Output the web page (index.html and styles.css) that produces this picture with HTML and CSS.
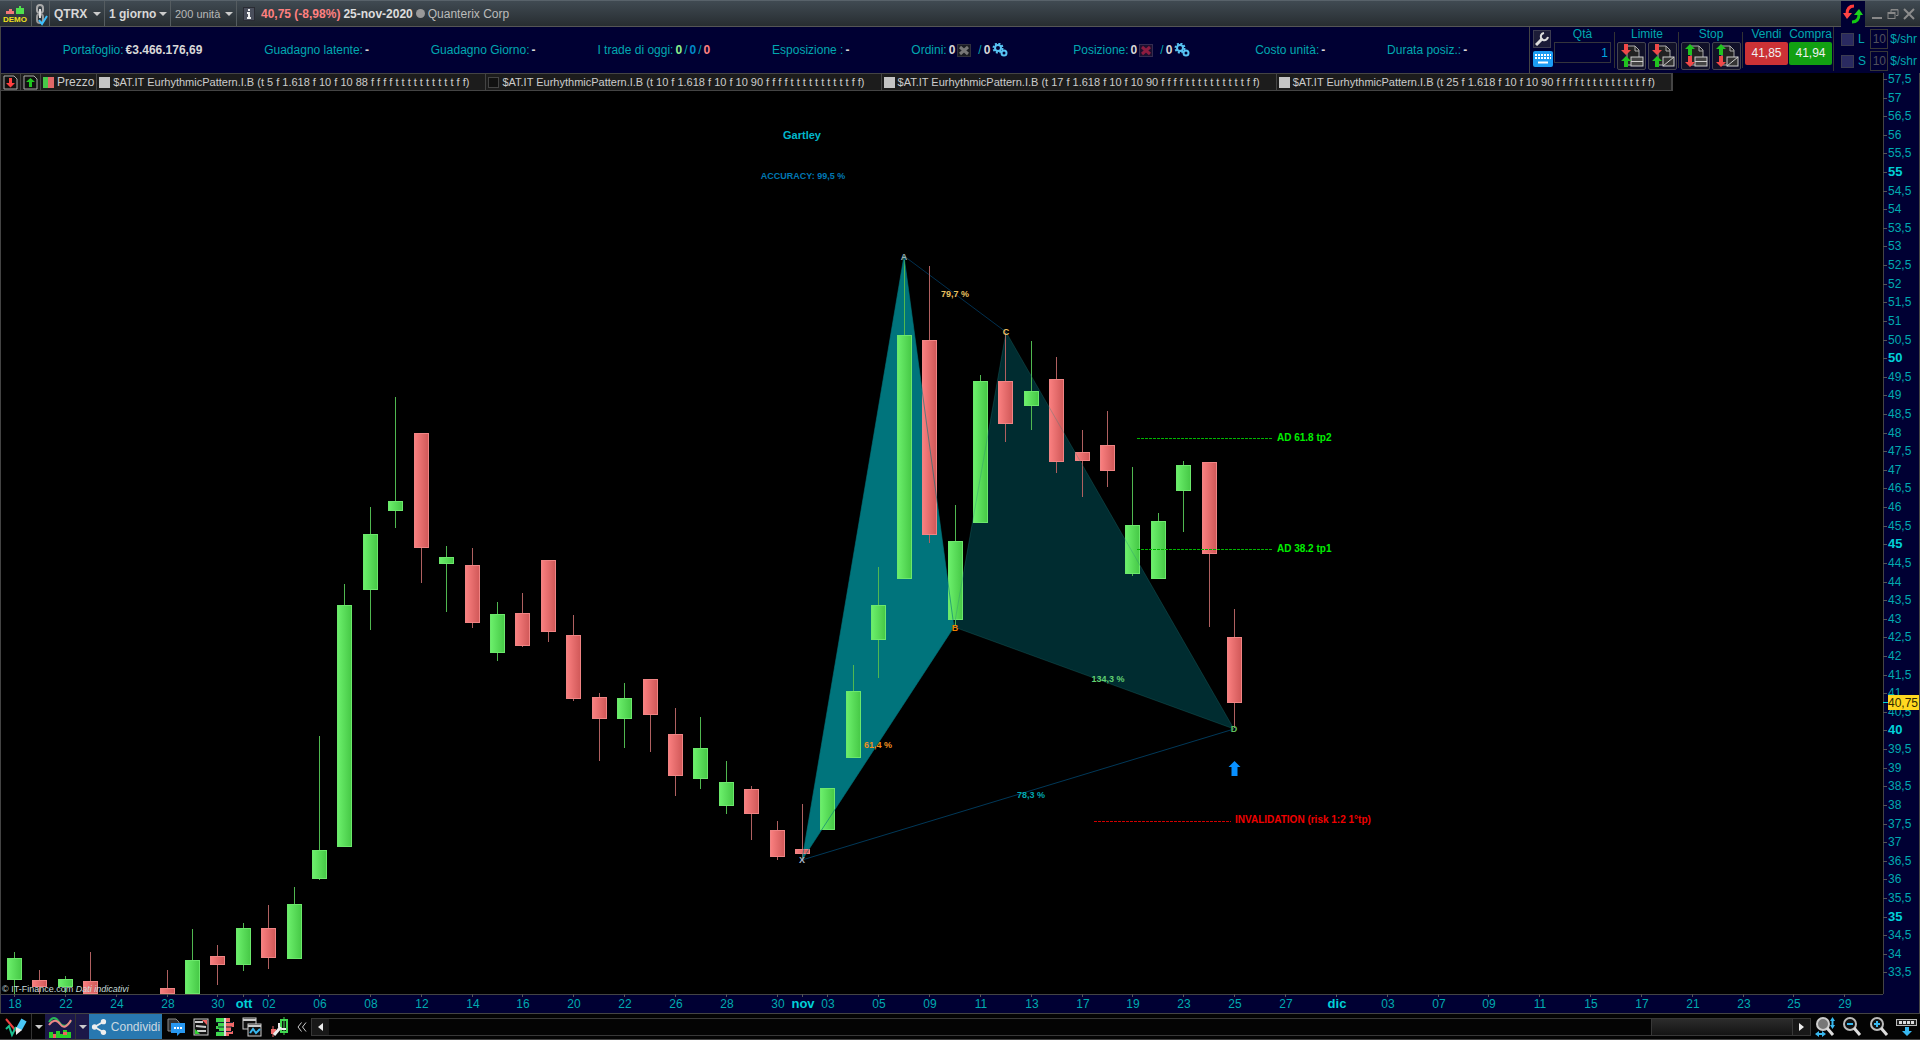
FILE: index.html
```html
<!DOCTYPE html>
<html lang="it">

<head>
    <meta charset="UTF-8">
    <meta name="viewport" content="width=device-width, initial-scale=1.0">
    <title>QTRX - Quanterix Corp</title>

    <link rel="stylesheet" href="styles.css">
</head>

<body>

    <div class="titlebar">
        <div class="cell demo">
            <svg width="26" height="24" viewBox="0 0 26 24">
                <path d="M4 9h8v3H4zM7 7h3v3H7z" fill="#f07878" />
                <path d="M14 6h8v6h-8zM17 4h2v3h-2z" fill="#4fe04f" />
                <text x="1" y="20" class="demo-text">DEMO</text>
            </svg>
        </div>
        <div class="cell link">
            <svg width="16" height="24" viewBox="0 0 16 24" fill="none">
                <rect x="4" y="3" width="6" height="8" rx="3" stroke="#aaa" stroke-width="2" />
                <rect x="4" y="12" width="6" height="9" rx="3" stroke="#999" stroke-width="2" />
                <path d="M7 7v9" stroke="#ddd" stroke-width="2" />
                <path d="M6 18l3 4 5-8" stroke="#3cc0ff" stroke-width="2" />
            </svg>
        </div>
        <label class="cell picker">
            <select class="bold" aria-label="Titolo"><option>QTRX</option></select>
            <span class="caret"></span>
        </label>
        <label class="cell picker">
            <select class="bold" aria-label="Periodo"><option>1 giorno</option></select>
            <span class="caret"></span>
        </label>
        <label class="cell picker">
            <select aria-label="Storico"><option>200 unità</option></select>
            <span class="caret"></span>
        </label>
        <div class="quote">
            <svg width="12" height="14" viewBox="0 0 12 14">
                <rect x="0.5" y="0.5" width="11" height="13" fill="#4a4f5c" stroke="#2a2c34" />
                <path d="M5 2h2v2H5zM4 5h3v5h1v2H4v-2h1V7H4z" fill="#eee" />
            </svg>
            <b class="loss">40,75 (-8,98%)</b>
            <b>25-nov-2020</b>
            <span class="dot"></span>
            <span>Quanterix Corp</span>
        </div>
        <div class="sync">
            <svg width="20" height="20" viewBox="0 0 20 20">
                <path d="M11 2Q4 2 4 10" fill="none" stroke="#ff3b3b" stroke-width="3" />
                <path d="M0 9h9l-5 6z" fill="#ff4545" />
                <path d="M9 18Q16 18 16 10" fill="none" stroke="#12c812" stroke-width="3" />
                <path d="M11 11h9l-4-6z" fill="#1fd01f" />
            </svg>
        </div>
        <div class="window-buttons">
            <button aria-label="Riduci"><svg width="12" height="14" viewBox="0 0 12 14"><path d="M1 11h10" stroke="#888" stroke-width="2" /></svg></button>
            <button aria-label="Ripristina"><svg width="12" height="12" viewBox="0 0 12 12" fill="none" stroke="#888"><path d="M4 4V1.500h7v6H9M4 2h7" /><rect x="1" y="4.500" width="7" height="6" /><path d="M1 5h7" stroke-width="2" /></svg></button>
            <button aria-label="Chiudi"><svg width="12" height="12" viewBox="0 0 12 12"><path d="M1 1l10 10M11 1L1 11" stroke="#8c8c8c" stroke-width="2" /></svg></button>
        </div>
    </div>

    <div class="infobar">
        <div class="stats">
            <div class="stat">Portafoglio: <b>€3.466.176,69</b></div>
            <div class="stat">Guadagno latente: <b>-</b></div>
            <div class="stat">Guadagno Giorno: <b>-</b></div>
            <div class="stat">I trade di oggi: <b class="gain">0</b> / <b class="flat">0</b> / <b class="loss">0</b></div>
            <div class="stat">Esposizione : <b>-</b></div>
            <div class="stat">Ordini: <b>0</b>
                <svg width="14" height="13" viewBox="0 0 14 13"><rect x="0.5" y="0.5" width="13" height="12" fill="#1a1c22" stroke="#30303c" /><path d="M3 3l8 7M11 3l-8 7" stroke="#777" stroke-width="3" /></svg>
                <span class="slash">/</span> <b>0</b><svg class="gears" width="16" height="14" viewBox="0 0 16 14" fill="none" stroke="#58c4f4"><circle cx="6" cy="5" r="3" stroke-width="2" /><circle cx="6" cy="5" r="4.500" stroke-width="2" stroke-dasharray="2 1.500" /><circle cx="12" cy="10" r="2.500" stroke-width="2" /></svg>
            </div>
            <div class="stat">Posizione: <b>0</b>
                <svg width="14" height="13" viewBox="0 0 14 13"><rect x="0.5" y="0.5" width="13" height="12" fill="#1c1030" stroke="#342c50" /><path d="M3 3l8 7M11 3l-8 7" stroke="#8c1c40" stroke-width="3" /></svg>
                <span class="slash">/</span> <b>0</b><svg class="gears" width="16" height="14" viewBox="0 0 16 14" fill="none" stroke="#58c4f4"><circle cx="6" cy="5" r="3" stroke-width="2" /><circle cx="6" cy="5" r="4.500" stroke-width="2" stroke-dasharray="2 1.500" /><circle cx="12" cy="10" r="2.500" stroke-width="2" /></svg>
            </div>
            <div class="stat">Costo unità: <b>-</b></div>
            <div class="stat">Durata posiz.: <b>-</b></div>
        </div>

        <div class="trade">
            <div class="tools">
                <button class="tool" aria-label="Impostazioni"><svg width="14" height="14" viewBox="0 0 14 14" fill="none" stroke="#ddd"><path d="M1 13l6-6" stroke-width="3" /><path d="M9 1Q5 2 6 6l2 2q4 1 5-3" stroke-width="2" /></svg></button>
                <button class="keyboard" aria-label="Tastiera"><svg width="16" height="11" viewBox="0 0 16 11"><path d="M0 1h16M0 4h16" stroke="#fff" stroke-width="2" stroke-dasharray="2 1" /><path d="M3 8.500h10" stroke="#fff" stroke-width="2" /></svg></button>
            </div>
            <div class="group qty">
                <label for="qty">Qtà</label>
                <input type="text" id="qty" value="1">
            </div>
            <div class="group ruled">
                <span>Limite</span>
                <div class="pair">
                    <button class="order" aria-label="Limite acquisto"><svg width="26" height="26" viewBox="0 0 26 26"><path d="M8 3h8l4 4v15H8z" fill="#222" stroke="#aaa" /><path d="M16 3v5h4" fill="none" stroke="#aaa" /><rect x="12" y="14" width="12" height="9" fill="#444" stroke="#ccc" /><path d="M12 18.500h12" stroke="#ccc" /><path d="M5 1h4v6h3l-5 5-5-5h3z" fill="#f04848" /><path d="M5 24h4v-6h3l-5-5-5 5h3z" fill="#20c420" /></svg></button>
                    <button class="order" aria-label="Limite vendita"><svg width="26" height="26" viewBox="0 0 26 26"><path d="M8 3h8l4 4v15H8z" fill="#222" stroke="#aaa" /><path d="M16 3v5h4" fill="none" stroke="#aaa" /><rect x="13" y="14" width="11" height="9" fill="#333" stroke="#ccc" /><path d="M13 23l11-9" stroke="#ccc" /><path d="M5 1h4v6h3l-5 5-5-5h3z" fill="#f04848" /><path d="M5 24h4v-6h3l-5-5-5 5h3z" fill="#20c420" /></svg></button>
                </div>
            </div>
            <div class="group ruled">
                <span>Stop</span>
                <div class="pair">
                    <button class="order" aria-label="Stop acquisto"><svg width="26" height="26" viewBox="0 0 26 26"><path d="M8 3h8l4 4v15H8z" fill="#222" stroke="#aaa" /><path d="M16 3v5h4" fill="none" stroke="#aaa" /><rect x="12" y="14" width="12" height="9" fill="#444" stroke="#ccc" /><path d="M12 18.500h12" stroke="#ccc" /><path d="M5 12h4V6h3L7 1 2 6h3z" fill="#20c420" /><path d="M5 13h4v6h3l-5 5-5-5h3z" fill="#f04848" /></svg></button>
                    <button class="order" aria-label="Stop vendita"><svg width="26" height="26" viewBox="0 0 26 26"><path d="M8 3h8l4 4v15H8z" fill="#222" stroke="#aaa" /><path d="M16 3v5h4" fill="none" stroke="#aaa" /><rect x="13" y="14" width="11" height="9" fill="#333" stroke="#ccc" /><path d="M13 23l11-9" stroke="#ccc" /><path d="M5 12h4V6h3L7 1 2 6h3z" fill="#20c420" /><path d="M5 13h4v6h3l-5 5-5-5h3z" fill="#f04848" /></svg></button>
                </div>
            </div>
            <div class="group ruled">
                <span>Vendi</span>
                <button class="sell">41,85</button>
            </div>
            <div class="group">
                <span>Compra</span>
                <button class="buy">41,94</button>
            </div>
            <div class="brackets">
                <div class="bracket">
                    <label class="side"><input type="checkbox">L</label>
                    <label class="offset"><input type="text" value="10">$/shr</label>
                </div>
                <div class="bracket">
                    <label class="side"><input type="checkbox">S</label>
                    <label class="offset"><input type="text" value="10">$/shr</label>
                </div>
            </div>
        </div>
    </div>

    <div class="chart">
        <svg id="chart" viewBox="0 73 1920 940" preserveAspectRatio="xMaxYMin meet">
            <defs>
                <linearGradient id="up">
                    <stop offset="0" stop-color="#6cf06c" />
                    <stop offset="1" stop-color="#46c846" />
                </linearGradient>
                <linearGradient id="down">
                    <stop offset="0" stop-color="#fa8080" />
                    <stop offset="1" stop-color="#d05858" />
                </linearGradient>
            </defs>
        </svg>
        <div class="legend">
            <div class="entry icon"><svg width="15" height="15" viewBox="0 0 15 15"><path d="M1 1h10l3 3v10H1z" fill="#111" stroke="#aaa" /><path d="M6 3h3v5h3l-4.500 4.500L3 8h3z" fill="#ff4040" /></svg></div>
            <div class="entry icon"><svg width="15" height="15" viewBox="0 0 15 15"><path d="M1 1h10l3 3v10H1z" fill="#111" stroke="#aaa" /><path d="M6 12h3V7h3L7.500 3 3 7h3z" fill="#20c820" /></svg></div>
            <div class="entry price"><span class="swatch two"></span>Prezzo</div>
            <div class="entry"><span class="swatch"></span>$AT.IT EurhythmicPattern.I.B (t 5 f 1.618 f 10 f 10 88 f f f f t t t t t t t t t t f f)</div>
            <div class="entry"><span class="swatch dark"></span>$AT.IT EurhythmicPattern.I.B (t 10 f 1.618 f 10 f 10 90 f f f f t t t t t t t t t t f f)</div>
            <div class="entry"><span class="swatch"></span>$AT.IT EurhythmicPattern.I.B (t 17 f 1.618 f 10 f 10 90 f f f f t t t t t t t t t t f f)</div>
            <div class="entry"><span class="swatch"></span>$AT.IT EurhythmicPattern.I.B (t 25 f 1.618 f 10 f 10 90 f f f f t t t t t t t t t t f f)</div>
        </div>
    </div>

    <div class="toolbar">
        <button class="draw" aria-label="Disegna"><svg width="24" height="22" viewBox="0 0 24 22" fill="none"><path d="M2 3l10 12" stroke="#f04040" stroke-width="2" /><path d="M2 13l3-3 3 9 4-8" stroke="#1cc090" stroke-width="2" /><path d="M15 13l5-9" stroke="#48c8f8" stroke-width="6" /><path d="M12 11l6 3-6 5z" fill="#eee" /></svg></button>
        <button class="arrow" aria-label="Strumenti di disegno"><span class="caret"></span></button>
        <button class="style lit" aria-label="Indicatori"><svg width="24" height="24" viewBox="0 0 24 24" fill="none"><path d="M1 7Q6-1 11 7T23 6" stroke="#28b858" stroke-width="2" /><path d="M1 10q6-8 11-1t11-4" stroke="#e88" stroke-width="2" /><path d="M1 23v-6h4v2h3v-3h4v3h3v-4h4v2h4v6z" fill="#28d028" /><path d="M5 19h3v4H5zM15 17h4v3h-4z" fill="#f06060" /></svg></button>
        <button class="arrow lit" aria-label="Elenco indicatori"><span class="caret"></span></button>
        <button class="share"><svg width="16" height="16" viewBox="0 0 18 18"><path d="M14 3L4 9l10 6" fill="none" stroke="#eee" stroke-width="2" /><circle cx="14" cy="3" r="3" fill="#eee" /><circle cx="4" cy="9" r="3" fill="#eee" /><circle cx="14" cy="15" r="3" fill="#eee" /></svg>Condividi</button>
        <div class="actions">
            <button aria-label="Chat"><svg width="18" height="18" viewBox="0 0 18 18"><path d="M1 1h8l3 3v9H1z" fill="#333" stroke="#888" /><path d="M4 5h14v10h-5l-3 3v-3H4z" fill="#2898f0" /><path d="M7 10h8" stroke="#fff" stroke-width="2" stroke-dasharray="2 1" /></svg></button>
            <button aria-label="Lista"><svg width="16" height="18" viewBox="0 0 16 18"><rect x="1" y="1" width="14" height="16" fill="#111" stroke="#ccc" /><path d="M2 4h8M3 8l10 1M4 13h9" stroke="#ccc" stroke-width="2" /><path d="M9 2h5v5z" fill="#f06060" /><path d="M2 16h5l-5-5z" fill="#30d030" /></svg></button>
            <button aria-label="Book"><svg width="18" height="18" viewBox="0 0 18 18"><path d="M0 0h9v18H0v-4h3v-3H0V8h2V5H0z" fill="#40d850" /><path d="M9 0h5v4h4v5h-3v4h2v3h-4v2H9z" fill="#f06868" /><path d="M0 4.500h17M2 9h14M1 13.500h15" stroke="#123" /><path d="M9 0v18" stroke="#ddd" stroke-width="2" /></svg></button>
            <button aria-label="Finestre"><svg width="20" height="20" viewBox="0 0 20 20" fill="#111" stroke="#ccc"><rect x="1" y="1" width="13" height="11" /><path d="M1 3h13" stroke-width="2" /><rect x="6" y="7" width="13" height="12" /><path d="M6 9h13" stroke-width="2" /><path d="M8 16l3-4 3 4 4-4" fill="none" stroke="#38b8f0" stroke-width="2" /></svg></button>
            <button aria-label="Backtest"><svg width="20" height="20" viewBox="0 0 20 20"><path d="M2 12h5v5H2z" fill="#f06868" /><path d="M4 9v11" stroke="#f06868" /><path d="M12 3h6v12h-6z" fill="#111" stroke="#40d850" stroke-width="2" /><path d="M15 0v18" stroke="#40d850" /><path d="M5 18l6-7" stroke="#eee" stroke-width="3" /><path d="M10 6v4l3 2h4" fill="none" stroke="#eee" stroke-width="2" /></svg></button>
            <button aria-label="Riduci barra"><svg width="10" height="10" viewBox="0 0 10 10" fill="none" stroke="#ccc"><path d="M4.500 0.500L1 5l3.500 4.500M9 0.500L5.500 5 9 9.500" /></svg></button>
        </div>
        <div class="scroll">
            <button class="step" aria-label="Indietro"><span class="left"></span></button>
            <div class="track"><div class="thumb"></div></div>
            <button class="step" aria-label="Avanti"><span class="right"></span></button>
        </div>
        <div class="zoom">
            <button aria-label="Adatta"><svg width="20" height="20" viewBox="0 0 20 20"><circle cx="8" cy="7" r="6" fill="#777" stroke="#ccc" stroke-width="2" /><path d="M12 11l6 7" stroke="#ddd" stroke-width="3" /><path d="M17.500 2v8M2 17h7" stroke="#38b8f0" stroke-width="2" /><path d="M15 4l2.500-4L20 4zM15 8l2.500 4L20 8zM4 14l-4 3 4 3zM7 14l4 3-4 3z" fill="#38b8f0" /></svg></button>
            <button aria-label="Zoom indietro"><svg width="20" height="20" viewBox="0 0 20 20"><circle cx="8" cy="7" r="6" fill="#111" stroke="#bbb" stroke-width="2" /><path d="M12 11l6 7" stroke="#ddd" stroke-width="3" /><path d="M5 7h6" stroke="#38b8f0" stroke-width="2" /></svg></button>
            <button aria-label="Zoom avanti"><svg width="20" height="20" viewBox="0 0 20 20"><circle cx="8" cy="7" r="6" fill="#111" stroke="#bbb" stroke-width="2" /><path d="M12 11l6 7" stroke="#ddd" stroke-width="3" /><path d="M5 7h6M8 4v6" stroke="#38b8f0" stroke-width="2" /></svg></button>
            <button aria-label="Barra in basso"><svg width="22" height="18" viewBox="0 0 22 18"><rect x="0.500" y="1.500" width="20" height="6" fill="#222" stroke="#bbb" /><path d="M3 4.500h16" stroke="#ddd" stroke-width="3" stroke-dasharray="3 1" /><path d="M9 9h4v4h3l-5 5-5-5h3z" fill="#38b8f0" /></svg></button>
        </div>
    </div>

    <script src="app.js"></script>
</body>

</html>
```

FILE: styles.css
```css
* {
    box-sizing: border-box;
}

body {
    margin: 0;
    height: 100vh;
    display: flex;
    flex-direction: column;
    background-color: #000;
    color: #d8d8d8;
    font-family: "Liberation Sans", Arial, sans-serif;
    font-size: 12px;
    overflow: hidden;
}

button,
select,
input {
    font: inherit;
    color: inherit;
    margin: 0;
    padding: 0;
    border: none;
    background: none;
    outline: none;
}

button {
    display: flex;
    align-items: center;
    justify-content: center;
    cursor: pointer;
}

svg {
    display: block;
    flex: none;
}

b,
.bold {
    font-weight: bold;
}

.caret {
    border: 4px solid transparent;
    border-top-color: #ccc;
    border-bottom: none;
}

/* title bar */
.titlebar {
    display: flex;
    align-items: stretch;
    height: 27px;
    border-top: 1px solid #58626a;
    border-bottom: 1px solid #555;
    background: linear-gradient(#404a52, #272d31);
}

.cell {
    display: flex;
    align-items: center;
    justify-content: space-between;
    border-right: 1px solid #555c60;
    padding: 0 3px 0 4px;
}

.cell.demo {
    width: 32px;
    padding: 0 2px;
}

.demo-text {
    font-size: 8px;
    font-weight: bold;
    fill: #f0e020;
}

.cell.link {
    width: 18px;
    padding: 0 1px;
}

.picker {
    width: 66px;
}

.picker:nth-child(3) {
    width: 55px;
}

.picker select {
    appearance: none;
}

.picker select:not(.bold) {
    font-size: 11px;
    color: #b8b8b8;
}

.quote {
    display: flex;
    align-items: center;
    gap: 3px;
    padding-left: 6px;
    flex: 1;
    color: #bbb;
}

.quote b {
    color: #ddd;
}

.quote .loss {
    margin-left: 3px;
    color: #ff8080;
}

.dot {
    width: 9px;
    height: 9px;
    border-radius: 50%;
    background-color: #999;
}

.sync {
    width: 24px;
    display: flex;
    align-items: center;
    justify-content: center;
    background-color: #000033;
    margin-bottom: -1px;
}

.window-buttons {
    display: flex;
    align-items: center;
    gap: 4px;
    padding: 0 5px 0 6px;
}

/* account info */
.infobar {
    display: flex;
    height: 46px;
    background-color: #000033;
    color: #00a8b0;
    border-left: 1px solid #444;
}

.stats {
    flex: 1;
    display: flex;
    align-items: center;
    justify-content: space-evenly;
}

.stat {
    display: flex;
    align-items: center;
    gap: 2px;
    white-space: nowrap;
}

.stat b {
    color: #d8d8d8;
}

.stat .gain {
    color: #8cf08c;
}

.stat .flat {
    color: #0088c8;
}

.stat .loss {
    color: #ff8080;
}

.slash {
    margin-left: 5px;
}

.gears {
    margin-right: 3px;
}

.trade {
    width: 391px;
    flex: none;
    display: flex;
    align-items: flex-start;
    padding-left: 3px;
    border-left: 1px solid #444;
}

.tools {
    display: flex;
    flex-direction: column;
    gap: 3px;
    padding-top: 3px;
    width: 20px;
}

.tool {
    width: 18px;
    height: 18px;
    background-color: #1c1c38;
    border: 1px solid #3c3c50;
}

.keyboard {
    width: 20px;
    height: 16px;
    background-color: #1c9cf4;
    border-radius: 2px;
}

.group {
    display: flex;
    flex-direction: column;
    align-items: center;
    gap: 1px;
    padding-top: 1px;
    line-height: 13px;
}

.qty {
    padding: 1px 3px 0 1px;
}

.qty input {
    width: 57px;
    height: 21px;
    padding-right: 2px;
    border: 1px solid #34343c;
    text-align: right;
    color: #00a8e0;
}

.ruled {
    position: relative;
    padding-left: 3px;
    margin-right: 1px;
}

.ruled::before {
    content: "";
    position: absolute;
    left: 0;
    top: 5px;
    width: 1px;
    height: 36px;
    background-color: #333;
}

.pair {
    display: flex;
    gap: 2px;
}

.order {
    width: 29px;
    height: 28px;
    border: 1px solid #444450;
    border-radius: 2px;
    background-color: #111128;
}

.sell,
.buy {
    width: 43px;
    height: 23px;
    border-radius: 2px;
    color: #f0f0f0;
}

.sell {
    background-color: #cc3236;
}

.buy {
    background-color: #12a012;
}

.brackets {
    flex: 1;
    display: flex;
    flex-direction: column;
    gap: 2px;
    padding: 2px 3px 0 7px;
    margin-left: 1px;
    border-left: 1px solid #333;
}

.bracket,
.side,
.offset {
    display: flex;
    align-items: center;
    gap: 2px;
}

.bracket {
    justify-content: space-between;
}

.side {
    gap: 4px;
}

.side input {
    appearance: none;
    width: 13px;
    height: 13px;
    background-color: #2a2a60;
    border: 1px solid #3c3c50;
}

.offset input {
    width: 18px;
    height: 20px;
    border: 1px solid #383838;
    text-align: center;
    color: #50505c;
}

/* chart */
.chart {
    position: relative;
    flex: 1;
    min-height: 0;
}

#chart {
    width: 100%;
    height: 100%;
}

#chart text {
    font-size: 12px;
    fill: #00aab0;
}

#chart .major {
    font-size: 13px;
    font-weight: bold;
    fill: #00d0d8;
}

#chart .note {
    font-size: 9px;
    font-weight: bold;
}

#chart .target {
    font-size: 10px;
    font-weight: bold;
}

#chart .name {
    font-size: 11px;
    font-weight: bold;
}

#chart .credit {
    font-size: 9px;
    fill: #c8dcdc;
}

.italic {
    font-style: italic;
}

.legend {
    position: absolute;
    left: 0;
    top: 0;
    display: flex;
    height: 18px;
    background-color: #1c1c1c;
    border: 1px solid #444;
    font-size: 11px;
    white-space: nowrap;
    color: #ccc;
}

.entry {
    display: flex;
    align-items: center;
    gap: 3px;
    padding: 0 16px 0 2px;
    border-right: 1px solid #444;
}

.entry.icon {
    width: 20px;
    padding: 0 2px;
}

.entry.price {
    padding-right: 2px;
    font-size: 12px;
}

.swatch {
    width: 11px;
    height: 11px;
    background-color: #c4c4c4;
}

.swatch.dark {
    background-color: #111;
    border: 1px solid #444;
}

.swatch.two {
    background: linear-gradient(90deg, #48c848 50%, #e06868 50%);
}

/* bottom bar */
.toolbar {
    display: flex;
    align-items: stretch;
    height: 27px;
    background-color: #040404;
    border-top: 1px solid #444;
    border-bottom: 1px solid #444;
}

.draw {
    width: 32px;
    border-right: 1px solid #333;
}

.arrow {
    width: 13px;
}

.style {
    width: 31px;
    border-right: 1px solid #333;
}

.lit {
    background-color: #1c1848;
}

.share {
    width: 73px;
    gap: 4px;
    margin-right: 5px;
    background-color: #2878b0;
    color: #ccd8e0;
}

.actions {
    display: flex;
    align-items: center;
    justify-content: space-between;
    width: 140px;
    margin-right: 4px;
}

.scroll {
    flex: 1;
    align-self: center;
    display: flex;
    height: 18px;
    border: 1px solid #383838;
}

.step {
    width: 17px;
    background-color: #181818;
}

.left,
.right {
    border: 4px solid transparent;
}

.left {
    border-left: none;
    border-right: 5px solid #eee;
}

.right {
    border-right: none;
    border-left: 5px solid #eee;
}

.track {
    flex: 1;
    display: flex;
    justify-content: flex-end;
}

.thumb {
    width: 142px;
    background: linear-gradient(#2c2c2c, #141414);
    border: 1px solid #383838;
    border-width: 0 1px;
}

.zoom {
    display: flex;
    align-items: center;
    gap: 7px;
    padding: 0 2px 0 4px;
}
```

FILE: app.js
```javascript
var chart = document.getElementById("chart");
var RIGHT = 1883;
var BOTTOM = 994;
var STEP = 25.42;

// slot, up/down, high, body top, body bottom, low
var candles = [
    [0, 1, 952, 958, 980, 994], [1, 0, 970, 980, 987, 994], [2, 1, 976, 979, 987, 993],
    [3, 0, 952, 981, 994, 994], [6, 0, 970, 988, 994, 994], [7, 1, 929, 960, 994, 994],
    [8, 0, 945, 956, 965, 985], [9, 1, 923, 928, 965, 971], [10, 0, 905, 928, 958, 969],
    [11, 1, 887, 904, 959, 959], [12, 1, 736, 850, 879, 880], [13, 1, 584, 605, 847, 847],
    [14, 1, 507, 534, 590, 630], [15, 1, 397, 501, 511, 528], [16, 0, 433, 433, 548, 583],
    [17, 1, 546, 557, 564, 612], [18, 0, 548, 565, 623, 628], [19, 1, 602, 614, 653, 661],
    [20, 0, 593, 613, 646, 647], [21, 0, 560, 560, 632, 642], [22, 0, 615, 635, 699, 701],
    [23, 0, 693, 697, 719, 761], [24, 1, 683, 698, 719, 748], [25, 0, 679, 679, 715, 752],
    [26, 0, 708, 734, 776, 796], [27, 1, 717, 748, 779, 789], [28, 1, 761, 782, 806, 814],
    [29, 0, 786, 789, 814, 840], [30, 0, 821, 830, 857, 860], [31, 0, 804, 849, 854, 860],
    [32, 1, 788, 788, 830, 830], [33, 1, 665, 691, 758, 758], [34, 1, 567, 605, 640, 678],
    [35, 1, 260, 335, 579, 579], [36, 0, 266, 340, 535, 543], [37, 1, 505, 541, 620, 625],
    [38, 1, 375, 381, 523, 523], [39, 0, 333, 381, 424, 442], [40, 1, 341, 391, 406, 430],
    [41, 0, 357, 379, 462, 473], [42, 0, 430, 452, 461, 497], [43, 0, 411, 445, 471, 487],
    [44, 1, 467, 525, 574, 576], [45, 1, 513, 521, 579, 579], [46, 1, 461, 465, 491, 532],
    [47, 0, 462, 462, 554, 627], [48, 0, 609, 637, 703, 728]
];

var days = {
    0: "18", 2: "22", 4: "24", 6: "28", 8: "30", 9: "ott", 10: "02", 12: "06", 14: "08", 16: "12",
    18: "14", 20: "16", 22: "20", 24: "22", 26: "26", 28: "28", 30: "30", 31: "nov", 32: "03",
    34: "05", 36: "09", 38: "11", 40: "13", 42: "17", 44: "19", 46: "23", 48: "25", 50: "27",
    52: "dic", 54: "03", 56: "07", 58: "09", 60: "11", 62: "15", 64: "17", 66: "21", 68: "23",
    70: "25", 72: "29"
};

function add(name, attrs, text) {
    var el = document.createElementNS("http://www.w3.org/2000/svg", name);
    for (var key in attrs) {
        el.setAttribute(key, attrs[key]);
    }
    if (text) {
        el.textContent = text;
    }
    chart.appendChild(el);
    return el;
}

function xAt(slot) {
    return Math.round(14 + slot * STEP);
}

function yAt(price) {
    return Math.round(172 + (55 - price) * 37.23);
}

function line(x1, y1, x2, y2, color, dash) {
    add("line", { x1: x1, y1: y1, x2: x2, y2: y2, stroke: color, "stroke-dasharray": dash || "none" });
}

function label(x, y, text, cls, color, anchor) {
    return add("text", { x: x, y: y, "class": cls, style: color ? "fill:" + color : "", "text-anchor": anchor || "middle" }, text);
}

function drawAxes() {
    add("rect", { x: RIGHT, y: 73, width: 37, height: 940, fill: "#000033" });
    add("rect", { x: 0, y: BOTTOM, width: 1920, height: 19, fill: "#000033" });
    line(RIGHT + 0.5, 73, RIGHT + 0.5, BOTTOM, "#444");
    line(0, BOTTOM + 0.5, RIGHT, BOTTOM + 0.5, "#444");
    line(0.5, 73, 0.5, 1013, "#444");
    line(1919.5, 73, 1919.5, 1013, "#444");

    for (var p = 57.5; p > 33; p -= 0.5) {
        var y = yAt(p);
        line(RIGHT, y + 0.5, RIGHT + 4, y + 0.5, "#555");
        label(RIGHT + 5, y + 4, String(p).replace(".", ","), p % 5 ? "" : "major", "", "start");
    }
    for (var slot in days) {
        var x = xAt(slot);
        line(x + 0.5, BOTTOM, x + 0.5, BOTTOM + 3, "#555");
        label(x + 1, BOTTOM + 14, days[slot], isNaN(days[slot]) ? "major" : "");
    }

    // last price
    line(RIGHT, 702.5, RIGHT + 5, 702.5, "#00d0d8");
    add("rect", { x: RIGHT + 5, y: 695, width: 31, height: 15, fill: "#ffd820" });
    label(RIGHT + 5, 707, "40,75", "", "#302800", "start");
}

function drawCandles() {
    candles.forEach(function (c) {
        var x = xAt(c[0]);
        var color = c[1] ? "#50b850" : "#b06060";
        add("rect", { x: x, y: c[2], width: 1, height: c[5] - c[2], fill: color });
        add("rect", {
            x: x - 6.5, y: c[3] + 0.5, width: 14, height: c[4] - c[3] - 1,
            fill: c[1] ? "url(#up)" : "url(#down)", stroke: c[1] ? "#6ce86c" : "#f08484"
        });
    });
}

function drawPattern() {
    line(904, 256, 1006, 332, "#003050");
    line(802, 860, 1234, 729, "#003858");
    add("path", { d: "M802 860L904 256L954 627Z", fill: "#00747c" });
    add("path", { d: "M954 627L1006 332L1234 729Z", fill: "#002c30" });
    drawCandles();
    add("path", { d: "M802 860L904 256L954 627Z", fill: "none", stroke: "#00747c", "stroke-opacity": 0.6 });
    add("path", { d: "M954 627L1006 332L1234 729Z", fill: "none", stroke: "#208080", "stroke-opacity": 0.3 });

    line(1137, 438.5, 1273, 438.5, "#00b400", "3 1");
    line(1137, 549.5, 1273, 549.5, "#00b400", "3 1");
    line(1094, 821.5, 1231, 821.5, "#d00000", "3 1");
    label(1277, 441, "AD 61.8 tp2", "target", "#00f000", "start");
    label(1277, 552, "AD 38.2 tp1", "target", "#00f000", "start");
    label(1235, 823, "INVALIDATION (risk 1:2 1°tp)", "target", "#f00000", "start");

    label(802, 139, "Gartley", "name", "#00b8cc");
    label(803, 179, "ACCURACY: 99,5 %", "note", "#0078b4");
    label(904, 260, "A", "note", "#9ab0b4");
    label(802, 863, "X", "note", "#a8b8c8");
    label(955, 631, "B", "note", "#f08000");
    label(1006, 335, "C", "note", "#f0c060");
    label(1234, 732, "D", "note", "#60c060");
    label(955, 297, "79,7 %", "note", "#e8c060");
    label(878, 748, "61,4 %", "note", "#f09020");
    label(1108, 682, "134,3 %", "note", "#60d070");
    label(1031, 798, "78,3 %", "note", "#00a8b0");
    add("path", { d: "M1234.5 761l6 6h-3v9h-6v-9h-3z", fill: "#0890ff" });
}

function drawCredit() {
    var credit = label(2, 992, "© IT-Finance.com ", "credit", "", "start");
    var note = document.createElementNS("http://www.w3.org/2000/svg", "tspan");
    note.setAttribute("class", "italic");
    note.textContent = "Dati indicativi";
    credit.appendChild(note);
}

drawPattern();
drawCredit();
drawAxes();
```
